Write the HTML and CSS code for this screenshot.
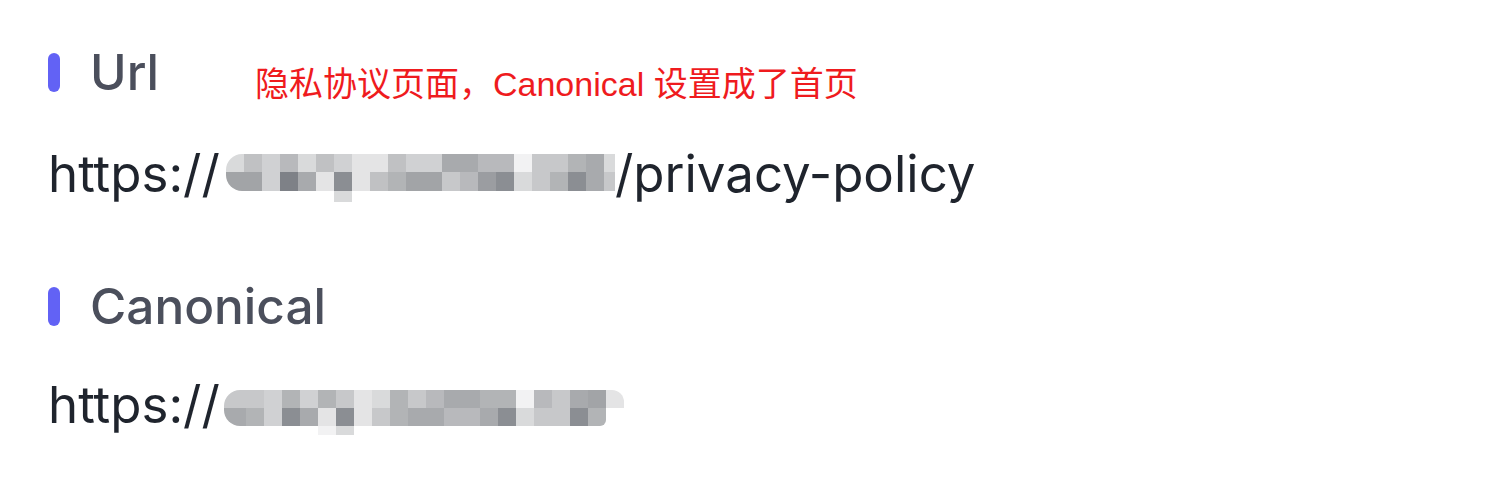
FILE: index.html
```html
<!DOCTYPE html>
<html lang="zh-CN">
<head>
<meta charset="utf-8">
<title>Url / Canonical</title>
<link rel="stylesheet" href="styles.css">
</head>
<body>
<main class="panel">
  <section class="field field-url">
    <h2 class="field-title"><span class="bar"></span>Url</h2>
    <p class="field-value"><span>https://</span><span class="mosaic m1"><i class="g3 tl"></i><i class="g6"></i><i class="g4"></i><i class="g7"></i><i class="g3"></i><i class="g6"></i><i class="g4"></i><i class="g2"></i><i class="g2"></i><i class="g6"></i><i class="g4"></i><i class="g4"></i><i class="g9"></i><i class="g9"></i><i class="g7"></i><i class="g7"></i><i class="g1"></i><i class="g5"></i><i class="g5"></i><i class="g8"></i><i class="g9"></i><i class="g3"></i><i class="g10 bl"></i><i class="g10"></i><i class="g4"></i><i class="g13"></i><i class="g9"></i><i class="g2"></i><i class="g12"></i><i class="g2"></i><i class="g6"></i><i class="g8"></i><i class="g10"></i><i class="g10"></i><i class="g5"></i><i class="g7"></i><i class="g11"></i><i class="g12"></i><i class="g3"></i><i class="g5"></i><i class="g8"></i><i class="g12"></i><i class="g9"></i><i class="g5"></i><i class="g3 drop"></i></span><span>/privacy-policy</span></p>
  </section>
  <section class="field field-canonical">
    <h2 class="field-title"><span class="bar"></span>Canonical</h2>
    <p class="field-value"><span>https://</span><span class="mosaic m2"><i class="g5 tl"></i><i class="g5"></i><i class="g4"></i><i class="g8"></i><i class="g4"></i><i class="g8"></i><i class="g5"></i><i class="g2"></i><i class="g3"></i><i class="g8"></i><i class="g5"></i><i class="g7"></i><i class="g9"></i><i class="g9"></i><i class="g8"></i><i class="g8"></i><i class="g1"></i><i class="g7"></i><i class="g5"></i><i class="g9"></i><i class="g10"></i><i class="g2 tr"></i><i class="g9 bl"></i><i class="g8"></i><i class="g4"></i><i class="g12"></i><i class="g9"></i><i class="g2"></i><i class="g12"></i><i class="g2"></i><i class="g5"></i><i class="g8"></i><i class="g9"></i><i class="g9"></i><i class="g7"></i><i class="g7"></i><i class="g9"></i><i class="g12"></i><i class="g3"></i><i class="g5"></i><i class="g5"></i><i class="g12"></i><i class="g8 br"></i><i class="g0"></i><i class="g1 drop-a"></i><i class="g3 drop"></i></span></p>
  </section>
  <p class="note">隐私协议页面，Canonical 设置成了首页</p>
</main>
</body>
</html>
```

FILE: styles.css
```css
* { box-sizing: border-box; }

html, body {
  margin: 0;
  padding: 0;
  background: #ffffff;
}

body {
  font-family: Inter, "Noto Sans", sans-serif;
}

.panel {
  position: relative;
  padding: 44px 0 0 48px;
}

.field-title {
  display: flex;
  align-items: center;
  gap: 30px;
  margin: 0;
  height: 56px;
  font-size: 49.5px;
  line-height: 56px;
  font-weight: 500;
  color: #4b4f5c;
}

.bar {
  width: 12px;
  height: 39px;
  border-radius: 6px;
  background: #6262f5;
}

.field-value {
  display: flex;
  align-items: flex-start;
  margin: 44px 0 0;
  height: 60px;
  font-size: 51px;
  line-height: 60px;
  color: #1f242d;
  white-space: nowrap;
}

.field-canonical {
  margin-top: 74px;
}

.field-canonical .field-value {
  margin-top: 41px;
}

.mosaic {
  display: grid;
  grid-template-columns: 18px repeat(20, 18px) 11px;
  grid-template-rows: 18px 19px 11px;
  margin-top: 10px;
  margin-left: 6px;
}

.m2 {
  grid-template-columns: 22px repeat(20, 18px) 18px;
  grid-template-rows: 18px 18px 17px;
  margin-left: 4px;
  margin-top: 15px;
}

.mosaic i {
  display: block;
}

.mosaic .tl { border-top-left-radius: 16px; }
.mosaic .bl { border-bottom-left-radius: 16px; }
.mosaic .tr { border-top-right-radius: 12px; }
.mosaic .br { border-bottom-right-radius: 6px; }

.mosaic .drop {
  grid-column: 7;
  grid-row: 3;
}

.mosaic .drop-a {
  grid-column: 6;
  grid-row: 3;
  height: 10px;
}

.g0 { background: transparent; }
.g1 { background: #f2f2f3; }
.g2 { background: #e4e4e5; }
.g3 { background: #d9dadb; }
.g4 { background: #d0d1d3; }
.g5 { background: #c7c8ca; }
.g6 { background: #c0c1c3; }
.g7 { background: #b8b9bc; }
.g8 { background: #b2b4b6; }
.g9 { background: #a8aaad; }
.g10 { background: #a2a4a7; }
.g11 { background: #9b9da1; }
.g12 { background: #8b8e93; }
.g13 { background: #7e8187; }

.note {
  position: absolute;
  left: 255px;
  top: 67px;
  margin: 0;
  font-family: "Liberation Sans", "Noto Sans CJK SC", sans-serif;
  font-size: 34px;
  line-height: 34px;
  color: #ef1b1e;
  white-space: nowrap;
}
```
